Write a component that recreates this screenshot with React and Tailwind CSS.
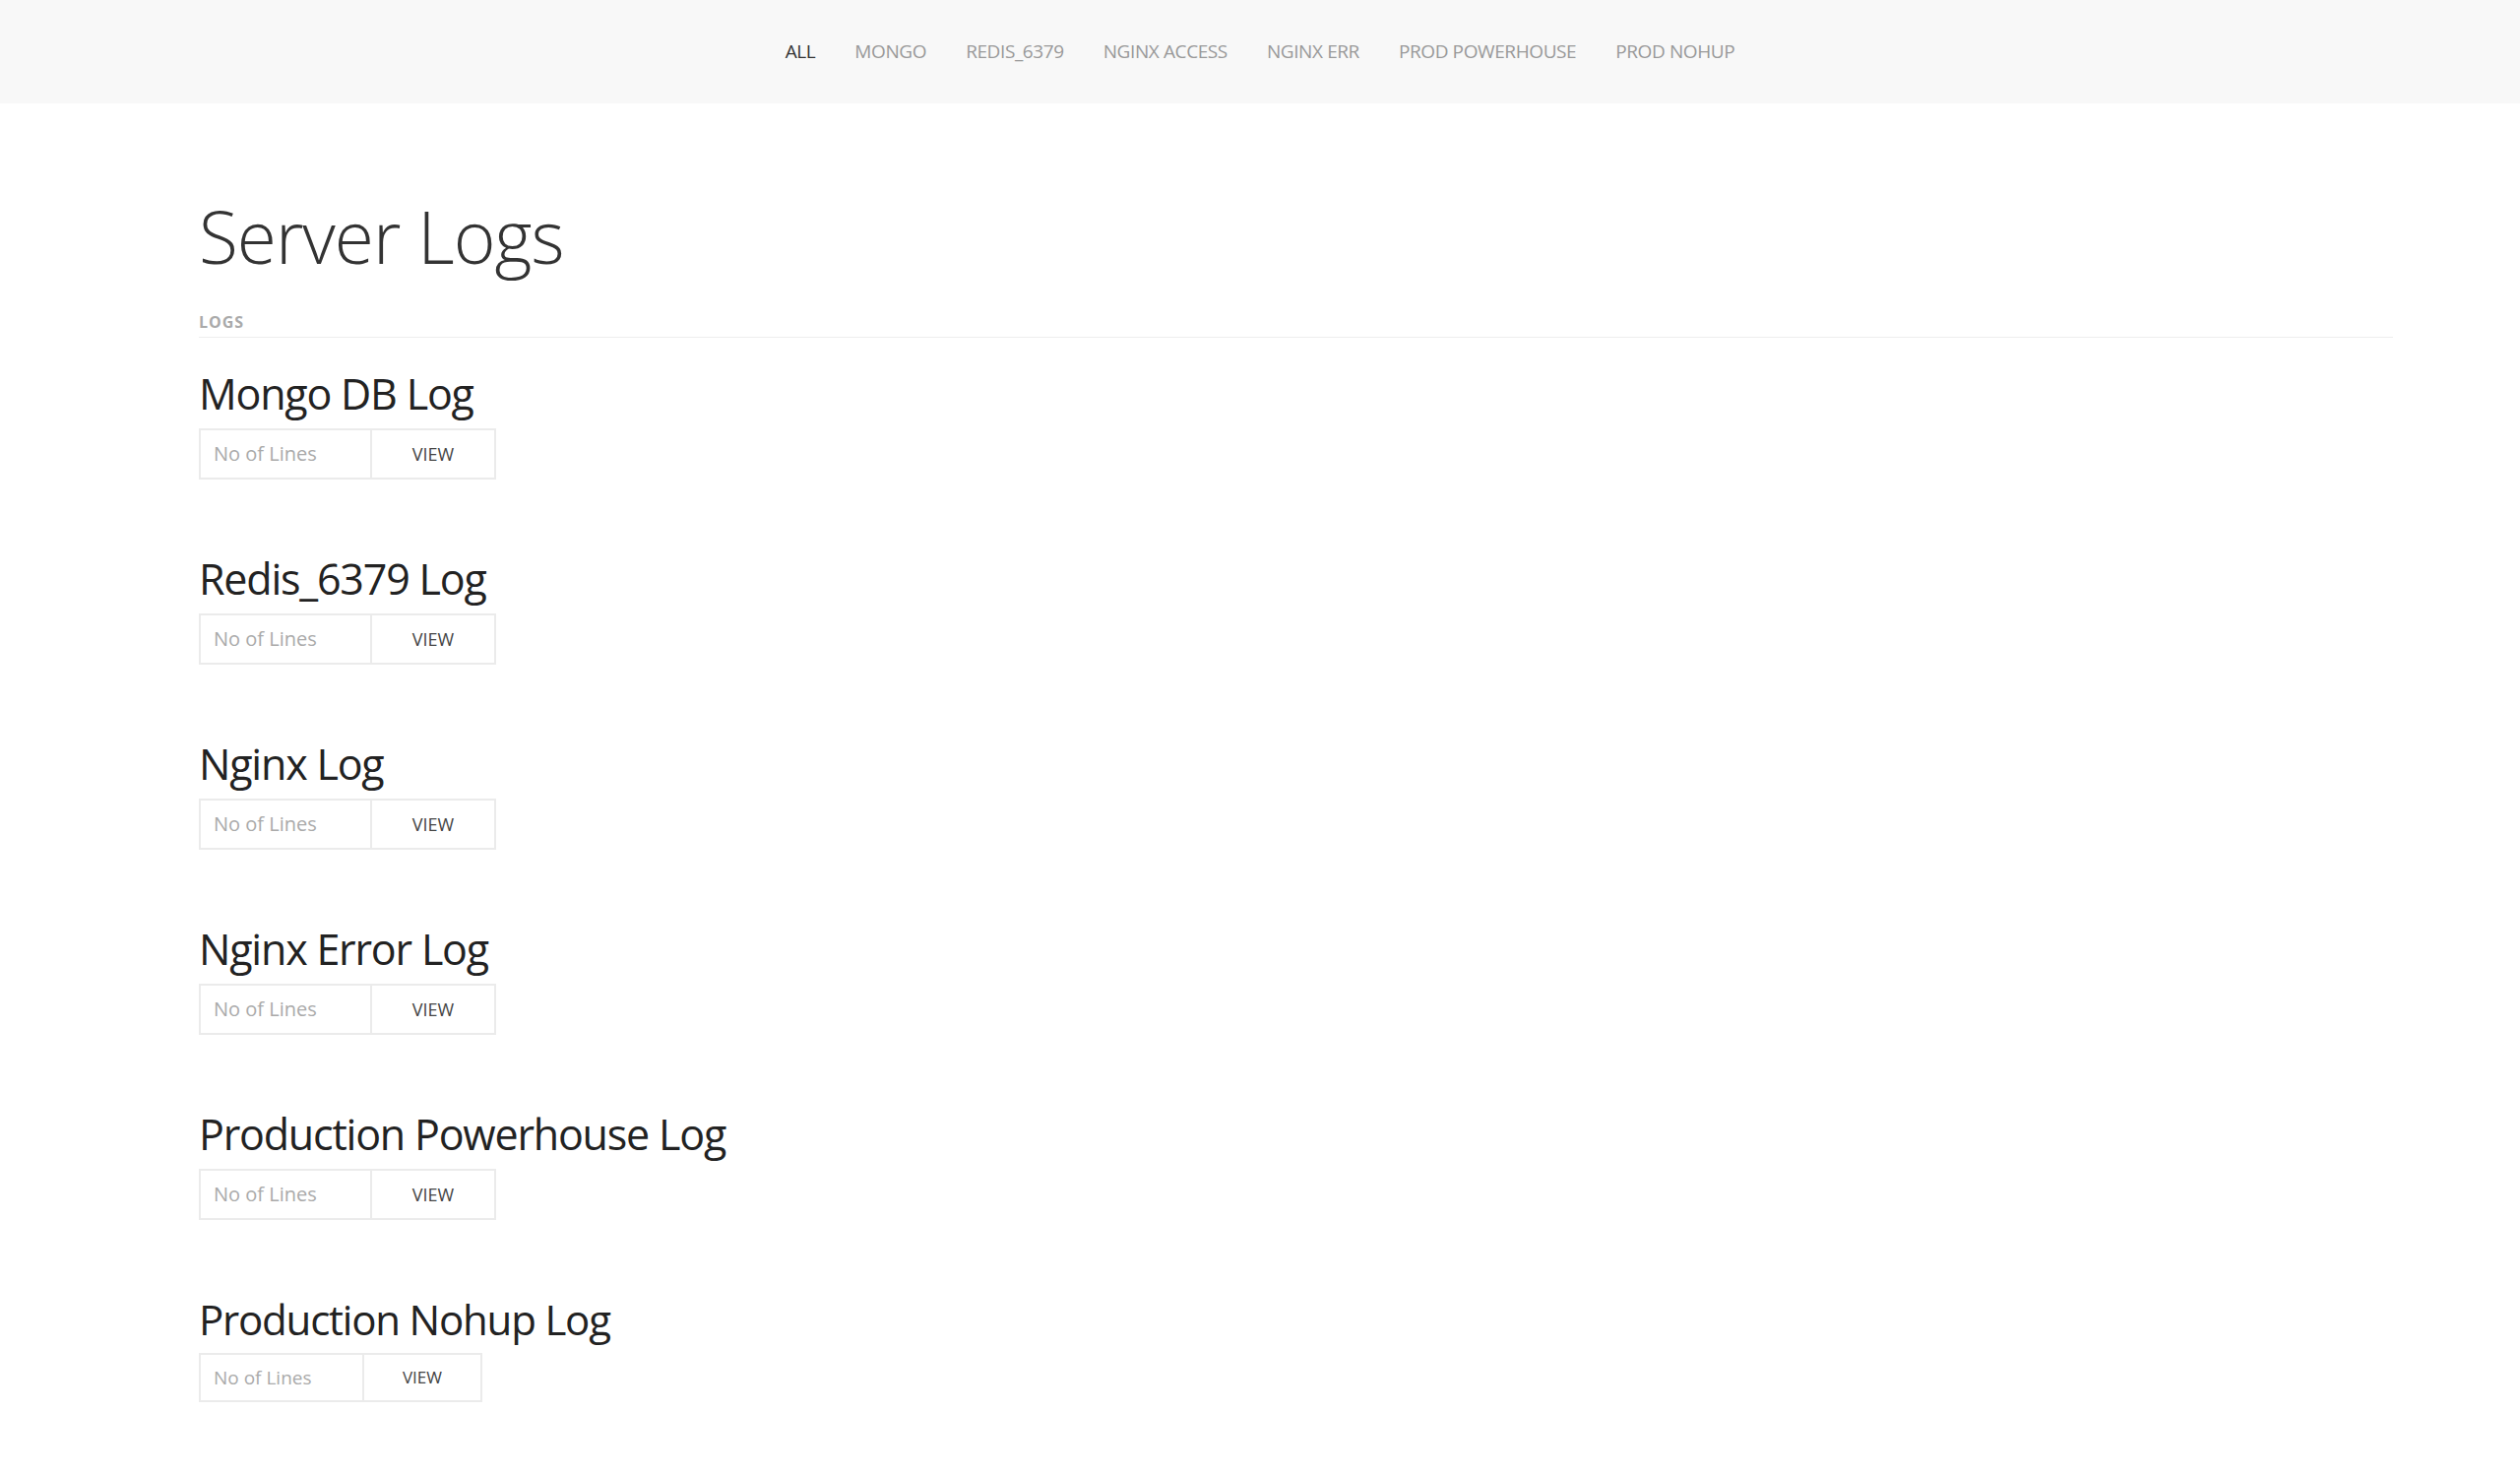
import React from 'react';

const navItems = ['All', 'Mongo', 'Redis_6379', 'Nginx Access', 'Nginx Err', 'Prod Powerhouse', 'Prod Nohup'];

const logs = [
  { id: 'mongo', title: 'Mongo DB Log' },
  { id: 'redis', title: 'Redis_6379 Log' },
  { id: 'nginx', title: 'Nginx Log' },
  { id: 'nginx-err', title: 'Nginx Error Log' },
  { id: 'powerhouse', title: 'Production Powerhouse Log' },
  { id: 'nohup', title: 'Production Nohup Log', small: true },
];

const LogBlock = ({ log }) => (
  <div className="mb-[78px]">
    <h3
      className={`leading-[45px] text-[#222] font-normal ${
        log.small ? 'text-[42px] tracking-[-1.2px]' : 'text-[43px] tracking-[-1.2px]'
      }`}
    >
      {log.title}
    </h3>
    <div
      className={`flex border-2 border-[#ebebeb] w-fit ${
        log.small ? 'mt-[12px] h-[50px]' : 'mt-[13px] h-[52px]'
      }`}
    >
      <input
        type="text"
        placeholder="No of Lines"
        className={`outline-none bg-white text-[#333] placeholder:text-[#aaa] pl-[13px] ${
          log.small ? 'w-[164px] text-[19px]' : 'w-[172px] text-[20px]'
        }`}
      />
      <button
        className={`border-l-2 border-[#ebebeb] bg-white text-[#444] uppercase ${
          log.small ? 'w-[120px] text-[17px]' : 'w-[126px] text-[18px]'
        }`}
      >
        View
      </button>
    </div>
  </div>
);

const App = () => {
  return (
    <div className="min-h-screen bg-white" style={{ fontFamily: '"Open Sans", "Noto Sans", sans-serif' }}>
      {/* Nav */}
      <nav className="h-[105px] bg-[#f8f8f8] flex items-center justify-center gap-[40px]">
        {navItems.map((item, i) => (
          <a
            key={item}
            href="#"
            className={`text-[19px] tracking-[-0.4px] uppercase ${i === 0 ? 'text-[#333]' : 'text-[#999]'}`}
          >
            {item}
          </a>
        ))}
      </nav>

      {/* Content */}
      <div className="pl-[202px] pr-[129px] pt-[98px]">
        <h1 className="text-[73px] leading-[73px] tracking-[-1px] font-light text-[#333]">Server Logs</h1>
        <div className="mt-[43px] pb-[7px] border-b border-[#eee]">
          <span className="block text-[16px] leading-[16px] font-bold tracking-[1px] text-[#aaa] uppercase">
            Logs
          </span>
        </div>
        <div className="mt-[34px]">
          {logs.map((log) => (
            <LogBlock key={log.id} log={log} />
          ))}
        </div>
      </div>
    </div>
  );
};

export default App;
